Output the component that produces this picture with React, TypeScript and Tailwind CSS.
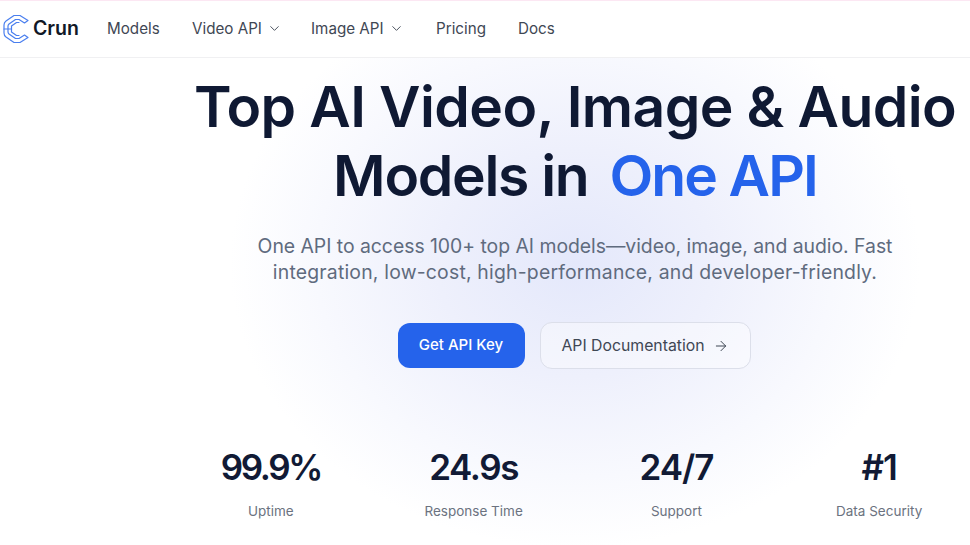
import { ChevronDown, ArrowRight } from "lucide-react";

function Logo() {
  return (
    <svg width="26" height="30" viewBox="0 0 26 30" fill="none" stroke="#4a7fef" strokeWidth="1.2" strokeLinejoin="round" strokeLinecap="round">
      <path d="M17 1.5 H11 L3 7 Q1 8.5 1 11 V19 Q1 21.5 3 23 L11 28.5 H17 L25 23.5 L21.5 21 L16 24.5 H12.5 L6 20 Q5 19 5 18 V12 Q5 11 6 10 L12.5 5.5 H16 L21.5 9 L25 6.5 Z" />
      <path d="M16 8.5 H13.5 L8.5 12 V18 L13.5 21.5 H16" />
      <path d="M8.5 15 H1" />
    </svg>
  );
}

const nav = [
  { label: "Models", w: "w-[85px]" },
  { label: "Video API", chevron: true, w: "w-[119px]" },
  { label: "Image API", chevron: true, w: "w-[125px]" },
  { label: "Pricing", w: "w-[82px]" },
  { label: "Docs", w: "" },
];

const stats = [
  { value: "99.9%", label: "Uptime", t: "tracking-[-2.4px]" },
  { value: "24.9s", label: "Response Time", t: "tracking-[-1.4px]" },
  { value: "24/7", label: "Support", t: "tracking-[-1px]" },
  { value: "#1", label: "Data Security", t: "tracking-[-1px]" },
];

export default function App() {
  return (
    <div className="h-[545px] w-[970px] overflow-hidden bg-white font-['Inter',sans-serif]">
      <div className="h-px bg-[#fce7f3]" />
      <header className="flex h-[57px] items-center border-b border-[#f0f0f2] pl-[3px]">
        <Logo />
        <span className="ml-1 w-[74px] text-[19.5px] font-semibold text-[#111827]">Crun</span>
        <nav className="flex items-center text-[15.2px] text-[#3f4754]">
          {nav.map((n) => (
            <div key={n.label} className={`flex items-center gap-[5px] ${n.w}`}>
              {n.label}
              {n.chevron && <ChevronDown size={15} strokeWidth={1.5} />}
            </div>
          ))}
        </nav>
      </header>
      <main className="flex h-[487px] flex-col items-center bg-[radial-gradient(ellipse_345px_285px_at_575px_205px,#e4e8fb_0%,#eef0fc_40%,#f8f9fe_75%,#ffffff_100%)] pl-[180px]">
        <h1 className="mt-[14px] flex flex-col items-center whitespace-nowrap text-[57px] font-semibold leading-[69px] text-[#0f1933]">
          <span className="tracking-[-0.6px]">Top AI Video, Image &amp; Audio</span>
          <span className="tracking-[-1.3px]">
            Models in <span className="ml-2 tracking-[-1.9px] text-[#2563eb]">One API</span>
          </span>
        </h1>
        <p className="mt-[23px] flex w-[680px] flex-col items-center text-[19.4px] leading-[26px] text-[#5f6b7e]">
          <span className="tracking-[-0.03px]">One API to access 100+ top AI models—video, image, and audio. Fast</span>
          <span className="tracking-[0.2px]">integration, low-cost, high-performance, and developer-friendly.</span>
        </p>
        <div className="mt-[37px] flex items-center gap-[15px] pr-[2px]">
          <button className="flex h-[45px] w-[127px] items-center justify-center rounded-xl bg-[#2563eb] text-[15px] font-medium text-white">
            Get API Key
          </button>
          <button className="flex h-[47px] w-[211px] items-center justify-center gap-2 rounded-xl border border-[#dcdfea] bg-white/40 text-[15.8px] text-[#3f4754]">
            API Documentation
            <ArrowRight size={16} strokeWidth={1.5} />
          </button>
        </div>
        <div className="mt-[75px] grid w-[815px] grid-cols-4 px-[2px] text-center">
          {stats.map((s) => (
            <div key={s.label} className="flex flex-col items-center">
              <div className={`text-[35px] font-semibold leading-[46px] text-[#111a35] ${s.t}`}>{s.value}</div>
              <div className="mt-[11px] text-[13.5px] leading-5 text-[#6b7280]">{s.label}</div>
            </div>
          ))}
        </div>
      </main>
    </div>
  );
}
